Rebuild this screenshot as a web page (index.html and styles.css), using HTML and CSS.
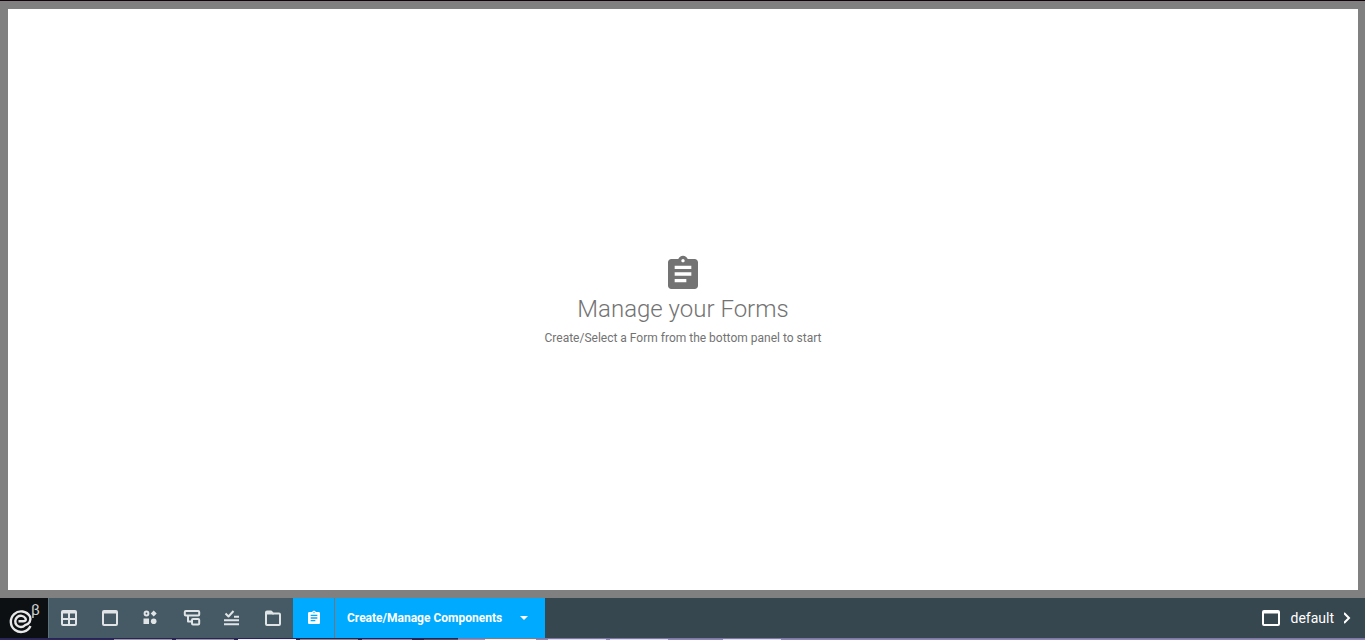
FILE: index.html
```
<!DOCTYPE html>
<html lang="en">
<head>
<meta charset="utf-8">
<meta name="viewport" content="width=device-width, initial-scale=1">
<title>Manage your Forms</title>
<link rel="stylesheet" href="styles.css">
</head>
<body>
<div class="app">
  <main class="workspace">
    <section class="canvas">
      <svg class="canvas-icon" viewBox="0 0 24 24" aria-hidden="true"><path d="M19 3h-4.18C14.4 1.84 13.3 1 12 1s-2.400.84-2.820 2H5c-1.100 0-2 .9-2 2v14c0 1.100.9 2 2 2h14c1.100 0 2-.9 2-2V5c0-1.100-.9-2-2-2zm-7 0c.55 0 1 .45 1 1s-.45 1-1 1-1-.45-1-1 .45-1 1-1zm2 14H7v-2h7v2zm3-4H7v-2h10v2zm0-4H7V7h10v2z"/></svg>
      <h1 class="canvas-title">Manage your Forms</h1>
      <p class="canvas-hint">Create/Select a Form from the bottom panel to start</p>
    </section>
  </main>
  <footer class="toolbar">
    <a class="brand" href="#" aria-label="Home">
      <svg class="brand-mark" viewBox="0 0 48 40" aria-hidden="true">
        <path class="ring" d="M30.500 28A10.300 10.300 0 1 1 30 18.500C31.500 22.500 29.500 26 25 27.200A5.600 5.600 0 1 1 25.500 20.300C26.500 22.500 25 23.300 23 23.300H18.500"/>
      </svg>
      <span class="brand-beta">β</span>
    </a>
    <nav class="tools">
      <button class="tool" aria-label="Layouts"><svg viewBox="0 0 18 18"><path class="line" d="M3 2h12q1 0 1 1v12q0 1-1 1H3q-1 0-1-1V3q0-1 1-1zM2 3.500h14M9 4v11M3 10h12"/></svg></button>
      <button class="tool" aria-label="Pages"><svg viewBox="0 0 18 18"><path class="line" d="M3 2h12q1 0 1 1v12q0 1-1 1H3q-1 0-1-1V3q0-1 1-1zM2 3.500h14"/></svg></button>
      <button class="tool" aria-label="Components"><svg viewBox="0 0 18 18"><circle class="line" cx="4.500" cy="4.500" r="1.900"/><path d="M11.700 1.500l3 3-3 3-3-3zM1.500 9.500H7V15H1.500z"/><circle cx="11.700" cy="12.200" r="2.800"/></svg></button>
      <button class="tool" aria-label="Workflows"><svg viewBox="0 0 18 18"><path class="line" d="M2.800 2h12.400q1 0 1 1v2.500q0 1-1 1H2.800q-1 0-1-1V3q0-1 1-1zM10 10h5.200q1 0 1 1v3.500q0 1-1 1H10q-1 0-1-1V11q0-1 1-1zM5 7v5.500h4"/></svg></button>
      <button class="tool" aria-label="Tasks"><svg viewBox="0 0 18 18"><path class="line" d="M2.500 4.500L5.500 7.500L10.500 2M11 7.800h5M1 11.300h15M1 15.300h15"/></svg></button>
      <button class="tool" aria-label="Files"><svg viewBox="0 0 18 18"><path class="line" d="M3 2.500h4l2 2h6q1 0 1 1V15q0 1-1 1H3q-1 0-1-1V3.500q0-1 1-1z"/><path d="M2 2.500h5.500l2.500 3H2z"/></svg></button>
      <button class="tool active" aria-label="Forms"><svg viewBox="0 0 24 24"><path d="M19 3h-4.180C14.400 1.840 13.300 1 12 1s-2.400.84-2.820 2H5c-1.100 0-2 .9-2 2v14c0 1.100.9 2 2 2h14c1.100 0 2-.9 2-2V5c0-1.100-.9-2-2-2zm-7 0c.55 0 1 .45 1 1s-.45 1-1 1-1-.45-1-1 .45-1 1-1zm2 14H7v-2h7v2zm3-4H7v-2h10v2zm0-4H7V7h10v2z"/></svg></button>
    </nav>
    <button class="manage">Create/Manage Components
      <svg class="caret" viewBox="0 0 8 4" aria-hidden="true"><path d="M0 0h8L4 4z"/></svg>
    </button>
    <button class="profile">
      <svg class="window" viewBox="0 0 18 16" aria-hidden="true"><path d="M2 1h14q1 0 1 1v12q0 1-1 1H2q-1 0-1-1V2q0-1 1-1zM1 2.500h16"/></svg>
      default
      <svg class="chevron" viewBox="0 0 7 12" aria-hidden="true"><path d="M0 1L5 6L0 11"/></svg>
    </button>
  </footer>
  <div class="edge" aria-hidden="true"></div>
</div>
</body>
</html>
```
FILE: styles.css
```
* { box-sizing: border-box; }
body { margin: 0; font-family: Roboto, "Liberation Sans", sans-serif; }
button { border: 0; padding: 0; background: none; color: inherit; font: inherit; cursor: pointer; }

.app { display: flex; flex-direction: column; min-height: 100vh; border-top: 1px solid #12000a; }
.workspace { flex: 1; display: flex; padding: 8px 7px 8px 8px; background: #808080; }
.canvas { flex: 1; display: flex; flex-direction: column; align-items: center; justify-content: center; padding-top: 2px; background: #fff; color: #737373; }
.canvas-icon { width: 40px; height: 40px; fill: currentColor; }
.canvas-title { margin: 0; font-size: 24px; line-height: 30px; font-weight: 300; }
.canvas-hint { margin: 4px 0 0; font-size: 12px; line-height: 20px; }

.toolbar { display: flex; height: 40px; background: #37474f; color: #fff; }
.brand { position: relative; width: 48px; background: #0c1013; color: #d0d0d0; text-decoration: none; }
.brand-mark { display: block; width: 48px; height: 40px; }
.ring { fill: none; stroke: #e8e8e8; stroke-width: 2.4; }
.brand-beta { position: absolute; top: 4px; right: 8px; font-size: 15px; line-height: 16px; }
.tools { display: flex; width: 287px; border-left: 1px solid #5d7480; background: #455a64; }
.tool { flex: 1; display: flex; align-items: center; justify-content: center; color: #e0e4e6; }
.tool svg { width: 18px; height: 18px; fill: currentColor; }
.tool .line { fill: none; stroke: currentColor; stroke-width: 2; stroke-linejoin: round; }
.tool.active { background: #00aaff; color: #fff; border-right: 1px solid #757575; }
.tool.active svg { width: 16px; height: 16px; }
.manage { display: flex; align-items: center; gap: 18px; padding: 0 17px 0 12px; background: #00aaff; font-size: 12px; font-weight: 700; }
.caret { width: 8px; height: 4px; fill: currentColor; }
.profile { display: flex; align-items: center; gap: 10px; margin-left: auto; padding-right: 14px; font-size: 14px; }
.window { width: 18px; height: 16px; fill: none; stroke: currentColor; stroke-width: 2; }
.chevron { width: 7px; height: 12px; fill: none; stroke: currentColor; stroke-width: 2; }
.edge {
  height: 2px;
  background:
    linear-gradient(90deg, #2a2456 0 458px, #7d78a4 458px) top / 100% 1px no-repeat,
    linear-gradient(90deg,
      #2c2860 0 114px, #9a96ac 114px 172px, #2a2456 172px 176px, #9a96ac 176px 234px,
      #2a2456 234px 238px, #f0f0fa 238px 296px, #2a2456 296px 300px, #8c8a98 300px 358px,
      #2a2456 358px 362px, #8480b8 362px 412px, #2a2456 412px 424px, #55526c 424px 458px,
      #9893c0 458px 485px, #f6f4cc 485px 536px, #8d88b8 536px 548px, #dcd8f0 548px 606px,
      #8d88b8 606px 610px, #dcd8f0 610px 668px, #8d88b8 668px 723px, #dcd8f0 723px 781px,
      #8d88b8 781px) bottom / 100% 1px no-repeat;
}
```
